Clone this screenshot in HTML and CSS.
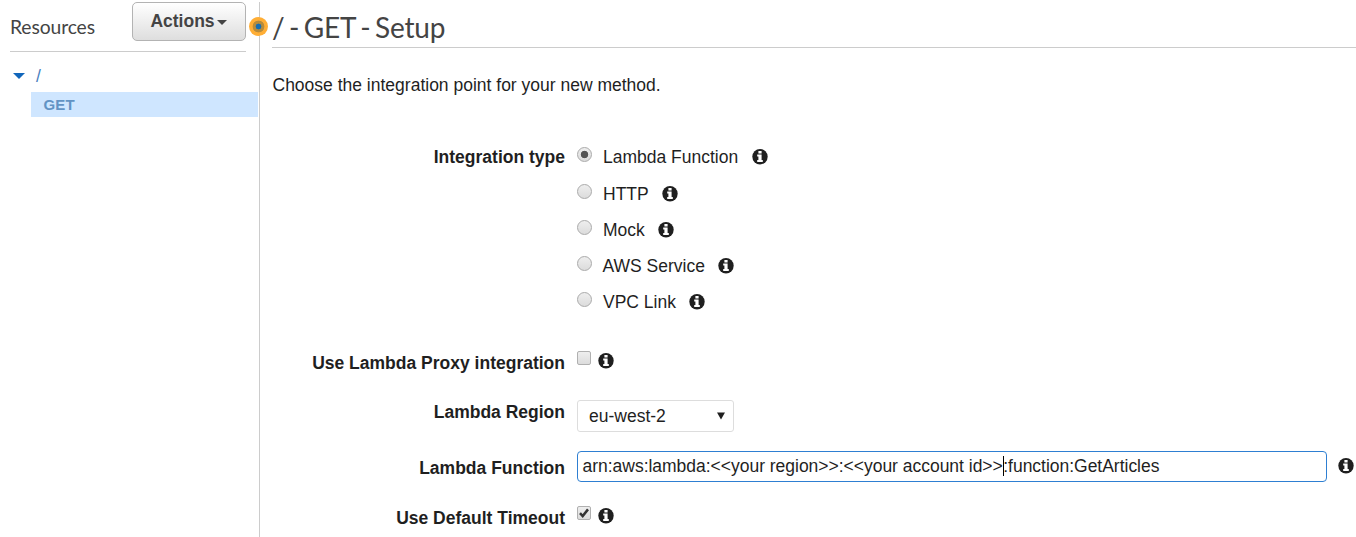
FILE: index.html
```html
<!DOCTYPE html>
<html lang="en">
<head>
<meta charset="utf-8">
<title>/ - GET - Setup</title>
<link rel="stylesheet" href="styles.css">
</head>
<body>
<svg class="defs" aria-hidden="true">
  <symbol id="info" viewBox="0 0 16 16">
    <circle cx="8" cy="7.7" r="7.7" fill="#1f1f1f"/>
    <path fill="#fff" d="M6.4 2h3.2v2.5H6.4zM5.2 5.6h4.4v5.3h1.2v2H5.2v-2h1.2V7.6H5.2z"/>
  </symbol>
</svg>
<div class="app">
  <aside class="sidebar">
    <div class="side-head">
      <span class="side-title">Resources</span>
      <button class="actions"><span class="actions-text">Actions</span><span class="caret"></span></button>
    </div>
    <div class="root"><span class="twisty"></span><span class="slash">/</span></div>
    <div class="method">GET</div>
    <span class="handle"></span>
  </aside>
  <main class="main">
    <h1 class="title"><span class="title-text">/ - GET - Setup</span></h1>
    <p class="intro"><span class="intro-text">Choose the integration point for your new method.</span></p>
    <div class="row types-row">
      <div class="label l-type">Integration type</div>
      <div class="types">
        <label class="type first"><span class="radio on"></span><span class="t-lambda">Lambda Function</span><svg class="info"><use href="#info"/></svg></label>
        <label class="type"><span class="radio"></span><span class="t-http">HTTP</span><svg class="info"><use href="#info"/></svg></label>
        <label class="type"><span class="radio"></span><span class="t-mock">Mock</span><svg class="info"><use href="#info"/></svg></label>
        <label class="type"><span class="radio"></span><span class="t-aws">AWS Service</span><svg class="info"><use href="#info"/></svg></label>
        <label class="type"><span class="radio"></span><span class="t-vpc">VPC Link</span><svg class="info"><use href="#info"/></svg></label>
      </div>
    </div>
    <div class="row proxy-row">
      <div class="label l-proxy">Use Lambda Proxy integration</div>
      <div class="check-line"><span class="check"></span><svg class="info"><use href="#info"/></svg></div>
    </div>
    <div class="row region-row">
      <div class="label l-region">Lambda Region</div>
      <div class="select"><span class="select-text">eu-west-2</span><svg class="arrow" viewBox="0 0 8 8"><path d="M0 .5h8L4 7.5z" fill="#1f1f1f"/></svg></div>
    </div>
    <div class="row function-row">
      <div class="label l-func">Lambda Function</div>
      <div class="input"><span class="arn-a">arn:aws:lambda:&lt;&lt;your region&gt;&gt;:&lt;&lt;your account id&gt;&gt;</span><span class="cursor"></span><span class="arn-b">:function:GetArticles</span></div>
      <svg class="info"><use href="#info"/></svg>
    </div>
    <div class="row timeout-row">
      <div class="label l-timeout">Use Default Timeout</div>
      <div class="check-line"><span class="check"><svg class="tick" viewBox="0 0 12 12"><path d="M2 6.2l2.7 2.9L10 2.4" fill="none" stroke="#333" stroke-width="2.5"/></svg></span><svg class="info"><use href="#info"/></svg></div>
    </div>
  </main>
</div>
</body>
</html>
```
FILE: styles.css
```css
* { box-sizing: border-box; }
body { margin: 0; background: #fff; color: #1f1f1f; font: 17.5px/20px "Liberation Sans", Arial, sans-serif; }
.defs { position: absolute; width: 0; height: 0; }
.app { display: flex; height: 537px; overflow: hidden; }

.sidebar { position: relative; width: 260px; flex: none; margin-top: 2px; border-right: 1px solid #ccc; }
.side-head { display: flex; justify-content: space-between; margin-left: 10px; width: 236px; height: 50px; border-bottom: 1px solid #ccc; }
.side-title { font: 19.3px/24px Lato, sans-serif; letter-spacing: -.1px; color: #444; padding-top: 13px; }
.actions { display: flex; justify-content: center; align-items: center; gap: 2px; width: 114px; height: 39px; padding: 0 1px 1px 0; border: 1px solid #b3b3b3; border-radius: 5px; background: linear-gradient(#fff, #dedede); color: #444; font: bold 17.5px/20px "Liberation Sans", Arial, sans-serif; }
.caret { border: 5px solid transparent; border-top-color: #444; border-bottom: 0; margin-top: 3px; }
.root { display: flex; align-items: center; height: 20px; margin-top: 14px; padding-left: 13px; color: #146eb4; }
.twisty { border: 6px solid transparent; border-top-color: #1166bb; border-bottom: 0; margin-right: 11px; }
.slash { color: #4a7fc0; }
.method { margin: 6px 1px 0 31px; height: 25px; padding-left: 12.5px; background: #cfe6ff; color: #6293c4; font-weight: bold; font-size: 15px; line-height: 25px; letter-spacing: .2px; }
.handle { position: absolute; left: 249px; top: 15px; width: 19px; height: 19px; border-radius: 50%; background: radial-gradient(circle, #146eb4 0 2.6px, #b78b3c 3.2px 5.6px, #ffae35 6.2px); }

.main { flex: 1; padding-left: 12px; }
.title { margin: 0; height: 48px; padding-top: 9px; border-bottom: 1px solid #ccc; font: 28px/36px Lato, sans-serif; letter-spacing: -.15px; word-spacing: -2.5px; color: #444; }
.intro { margin: 27px 0 0; padding-left: .5px; height: 20px; }
.row { display: flex; }
.label { width: 293px; margin-right: 12px; flex: none; text-align: right; font-weight: bold; }
.info { width: 16px; height: 16px; flex: none; }

.types-row { margin-top: 52px; }
.type { display: flex; height: 36px; }
.type.first { height: 37px; }
.type .info { margin: 2px 0 0 13.5px; }
.t-aws { margin-left: -.5px; }
.radio { width: 15px; height: 15px; margin-right: 11px; border: 1px solid #aaa; border-radius: 50%; background: linear-gradient(#eee, #dcdcdc); }
.radio.on { background: radial-gradient(circle, #555 0 3.4px, transparent 4.1px), linear-gradient(#eee, #dcdcdc); }

.proxy-row { margin-top: 25px; }
.check-line { display: flex; }
.check { width: 14px; height: 14px; margin: -2px 7px 0 0; border: 1px solid #b0b0b0; border-radius: 2px; background: linear-gradient(#eee, #dcdcdc); }
.tick { display: block; width: 12px; height: 12px; }

.region-row { margin-top: 27px; }
.region-row .label { padding-top: 2px; }
.select { display: flex; align-items: center; justify-content: space-between; width: 157px; height: 32px; padding: 0 8px 0 11px; border: 1px solid #ddd; border-radius: 3px; }
.arrow { width: 8px; height: 8px; }

.function-row { margin-top: 19px; }
.function-row .label { padding-top: 7px; }
.function-row .info { margin: 7px 0 0 11px; }
.input { display: flex; align-items: center; width: 750px; height: 31px; padding: 0 0 1px 4.5px; border: 1px solid #2e7fd2; border-radius: 4px; white-space: nowrap; letter-spacing: -.02px; }
.cursor { width: 1px; height: 20px; margin-right: -.5px; background: #000; }

.timeout-row { margin-top: 26px; }
```
